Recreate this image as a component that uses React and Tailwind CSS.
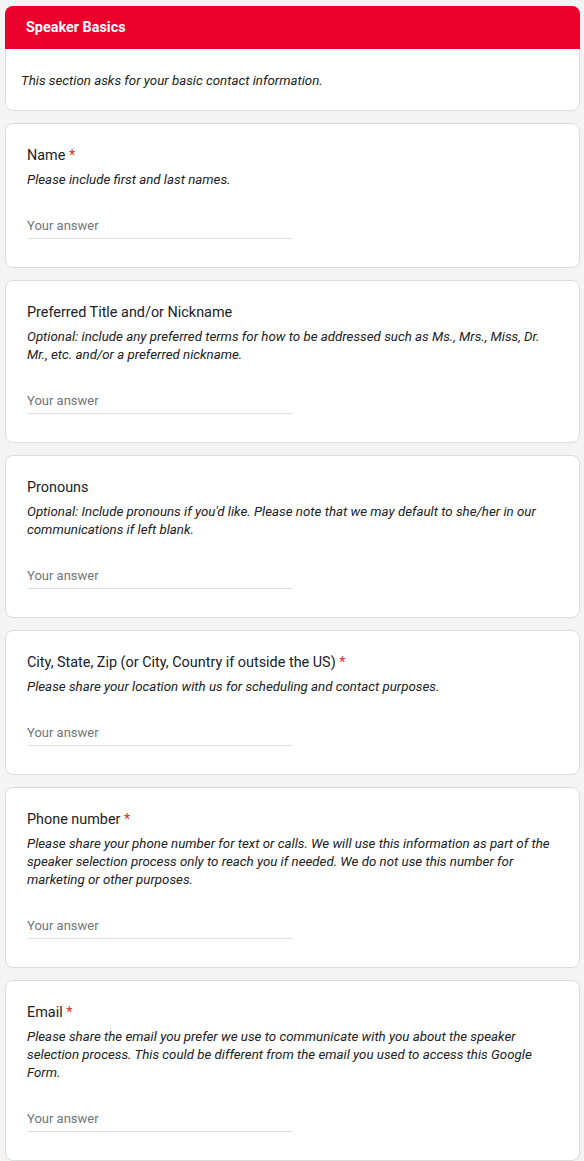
import React from "react";

const questions = [
  { title: "Name", required: true, desc: ["Please include first and last names."] },
  {
    title: "Preferred Title and/or Nickname",
    required: false,
    desc: [
      "Optional: include any preferred terms for how to be addressed such as Ms., Mrs., Miss, Dr. Mr., etc. and/or a preferred nickname.",
    ],
  },
  {
    title: "Pronouns",
    required: false,
    desc: [
      "Optional: Include pronouns if you'd like. Please note that we may default to she/her in our communications if left blank.",
    ],
  },
  {
    title: "City, State, Zip (or City, Country if outside the US)",
    required: true,
    desc: ["Please share your location with us for scheduling and contact purposes."],
  },
  {
    title: "Phone number",
    required: true,
    desc: [
      "Please share your phone number for text or calls. We will use this information as part of the speaker selection process only to reach you if needed. We do not use this number for marketing or other purposes.",
    ],
  },
  {
    title: "Email",
    required: true,
    desc: [
      "Please share the email you prefer we use to communicate with you about the speaker selection process. This could be different from the email you used to access this Google Form.",
    ],
  },
];

function Question({ q }) {
  return (
    <div className="rounded-[8px] border border-[#dadce0] bg-white px-[21px] pt-[20px] pb-[28px]">
      <div className="text-[14.4px] leading-[24px] text-[#202124]">
        {q.title}
        {q.required && <span className="text-[#d93025]"> *</span>}
      </div>
      <div className="mt-[3px] text-[13.3px] italic leading-[18px] text-[#202124]">
        {q.desc.map((d, i) => (
          <div key={i}>{d}</div>
        ))}
      </div>
      <div className="mt-[28px] w-1/2 border-b border-[#e0e0e0] pb-[3px] text-[13px] leading-[18px] text-[#70757a]">
        Your answer
      </div>
    </div>
  );
}

export default function App() {
  return (
    <div
      className="min-h-[1161px] w-full bg-[#f4f4f4] px-[5px] pr-[4px] pt-[6px] pb-[2px]"
      style={{ fontFamily: "Roboto, 'Noto Sans', Arial, sans-serif" }}
    >
      <div className="flex flex-col gap-[12px]">
        <div className="overflow-hidden rounded-[8px]">
          <div className="flex h-[43px] items-center bg-[#eb002b] pl-[21px] text-[14.4px] font-bold text-white">
            Speaker Basics
          </div>
          <div className="rounded-b-[8px] border-x border-b border-[#dadce0] bg-white pl-[15px] pr-[15px] pt-[23px] pb-[20px] text-[13.3px] italic leading-[18px] text-[#202124]">
            This section asks for your basic contact information.
          </div>
        </div>
        {questions.map((q, i) => (
          <Question key={i} q={q} />
        ))}
      </div>
    </div>
  );
}
